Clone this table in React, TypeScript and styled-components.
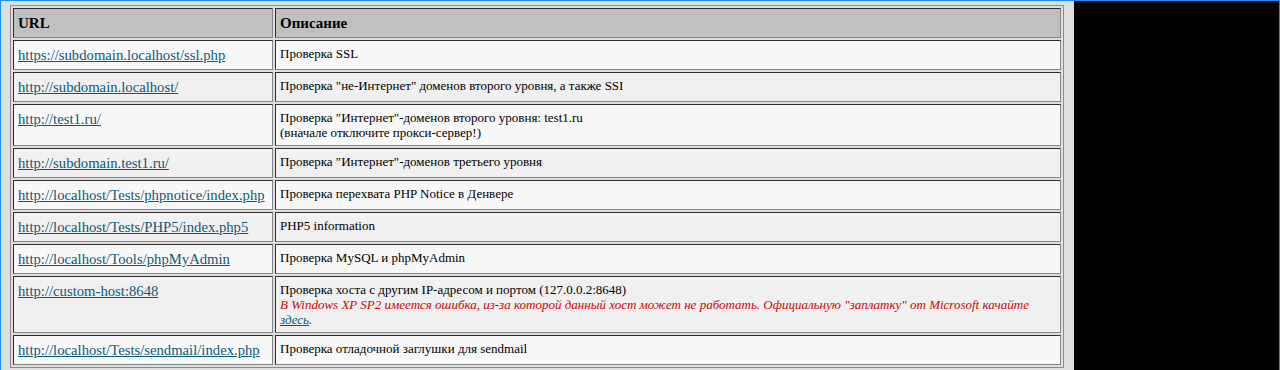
import styled, { createGlobalStyle, css } from "styled-components";

const GlobalStyle = createGlobalStyle`
html,
body {
  margin: 0;
  padding: 0;
  background: #000;
  font-family: "Liberation Serif", "Times New Roman", serif;
}
`;

const Frame = styled.div`
  display: flex;
  height: 370px;
  box-sizing: border-box;
  border: 1px solid #1a91f0;
  border-bottom: none;
  overflow: hidden;
`;

const Page = styled.div`
  width: 1073px;
  flex: 0 0 auto;
  background: #dedede;
  padding: 4px 0 0 9px;
  box-sizing: border-box;
`;

const Void = styled.div`
  flex: 1;
  background: #000;
`;

const Table = styled.table`
  width: 1054px;
  table-layout: fixed;
  border-collapse: separate;
  border-spacing: 2px;
  border: 1px solid #8c8c8c;
`;

interface CellProps {
  readonly $head?: boolean;
  readonly $alt?: boolean;
  readonly $wide?: boolean;
}

const Cell = styled.td<CellProps>`
  vertical-align: top;
  padding: 5px 4px;
  border-top: 1px solid #2e2e2e;
  border-left: 1px solid #2e2e2e;
  border-bottom: 1px solid #858585;
  border-right: 1px solid #858585;
  background: ${({ $alt }) => ($alt ? "#f0f0f0" : "#f8f8f8")};
  color: #000;
  font-size: 13px;
  line-height: 15px;
  text-align: left;
  white-space: normal;
  ${({ $wide }) =>
    $wide &&
    css`
      width: 250px;
      font-size: 14.7px;
      line-height: 18px;
      white-space: nowrap;
    `}
  ${({ $head }) =>
    $head &&
    css`
      background: #c0c0c0;
      font-size: 15px;
      line-height: 18px;
      font-weight: bold;
    `}
`;

const Link = styled.a`
  color: #0c5878;
  text-decoration: underline;
`;

const Warning = styled.span`
  color: #d40000;
  font-style: italic;
`;

type Row = { url: string; desc: React.ReactNode };

const rows: Row[] = [
  { url: "https://subdomain.localhost/ssl.php", desc: "Проверка SSL" },
  {
    url: "http://subdomain.localhost/",
    desc: 'Проверка "не-Интернет" доменов второго уровня, а также SSI',
  },
  {
    url: "http://test1.ru/",
    desc: (
      <>
        Проверка "Интернет"-доменов второго уровня: test1.ru
        <br />
        (вначале отключите прокси-сервер!)
      </>
    ),
  },
  {
    url: "http://subdomain.test1.ru/",
    desc: 'Проверка "Интернет"-доменов третьего уровня',
  },
  {
    url: "http://localhost/Tests/phpnotice/index.php",
    desc: "Проверка перехвата PHP Notice в Денвере",
  },
  { url: "http://localhost/Tests/PHP5/index.php5", desc: "PHP5 information" },
  {
    url: "http://localhost/Tools/phpMyAdmin",
    desc: "Проверка MySQL и phpMyAdmin",
  },
  {
    url: "http://custom-host:8648",
    desc: (
      <>
        Проверка хоста с другим IP-адресом и портом (127.0.0.2:8648)
        <br />
        <Warning>
          В Windows XP SP2 имеется ошибка, из-за которой данный хост может не
          работать. Официальную "заплатку" от Microsoft качайте{" "}
          <Link href="#">здесь</Link>.
        </Warning>
      </>
    ),
  },
  {
    url: "http://localhost/Tests/sendmail/index.php",
    desc: "Проверка отладочной заглушки для sendmail",
  },
];

export default function App() {
  return (
    <Frame>
      <GlobalStyle />
      <Page>
        <Table>
          <thead>
            <tr>
              <Cell as="th" $head $wide>
                URL
              </Cell>
              <Cell as="th" $head>
                Описание
              </Cell>
            </tr>
          </thead>
          <tbody>
            {rows.map((row, i) => (
              <tr key={row.url}>
                <Cell $wide $alt={i % 2 === 1}>
                  <Link href={row.url}>{row.url}</Link>
                </Cell>
                <Cell $alt={i % 2 === 1}>{row.desc}</Cell>
              </tr>
            ))}
          </tbody>
        </Table>
      </Page>
      <Void />
    </Frame>
  );
}
